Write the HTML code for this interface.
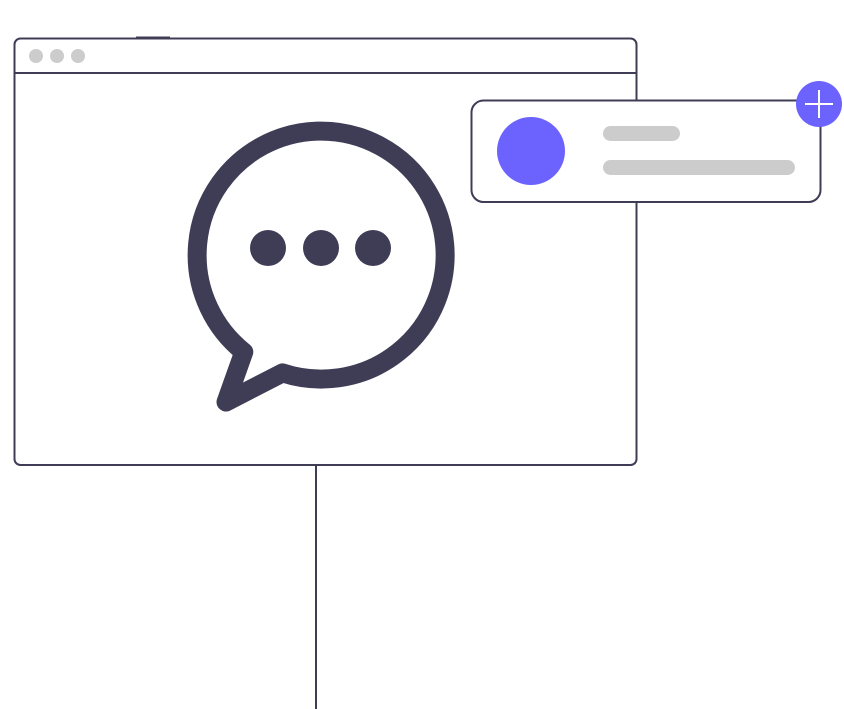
<!DOCTYPE html>
<html><head><meta charset="utf-8"><style>
html,body{margin:0;padding:0;background:#fff;width:844px;height:709px;overflow:hidden}
svg{display:block}
</style></head><body>
<svg width="844" height="709" viewBox="0 0 844 709" xmlns="http://www.w3.org/2000/svg">
<line x1="316" y1="465" x2="316" y2="709" stroke="#3f3d56" stroke-width="2"/>
<rect x="14.5" y="38.5" width="622" height="426.5" rx="6" fill="#fff" stroke="#3f3d56" stroke-width="2"/>
<line x1="136" y1="38" x2="170" y2="38" stroke="#3f3d56" stroke-width="3"/>
<line x1="15" y1="73" x2="636" y2="73" stroke="#3f3d56" stroke-width="2"/>
<circle cx="36" cy="56" r="7" fill="#ccc"/>
<circle cx="57" cy="56" r="7" fill="#ccc"/>
<circle cx="78" cy="56" r="7" fill="#ccc"/>
<path d="M282.5,372.9 A124,124 0 1 0 243.8,352.0 L226,402 Z" fill="none" stroke="#3f3d56" stroke-width="19" stroke-linejoin="round"/>
<circle cx="268" cy="248" r="18" fill="#3f3d56"/>
<circle cx="321" cy="248" r="18" fill="#3f3d56"/>
<circle cx="373" cy="248" r="18" fill="#3f3d56"/>
<rect x="471.5" y="100.5" width="349" height="101.5" rx="12" fill="#fff" stroke="#3f3d56" stroke-width="2"/>
<circle cx="531" cy="151" r="34" fill="#6c63ff"/>
<rect x="603" y="126" width="77" height="15" rx="7.5" fill="#ccc"/>
<rect x="603" y="160" width="192" height="15" rx="7.5" fill="#ccc"/>
<circle cx="819" cy="104" r="23" fill="#6c63ff"/>
<line x1="805" y1="104" x2="833" y2="104" stroke="#fff" stroke-width="2"/>
<line x1="819" y1="90" x2="819" y2="118" stroke="#fff" stroke-width="2"/>
</svg>
</body></html>
